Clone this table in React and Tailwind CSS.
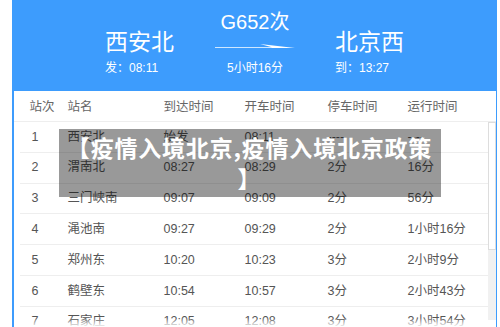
import React from 'react'

const rows = [
  ['1', '西安北', '始发', '08:11', '----', '----'],
  ['2', '渭南北', '08:27', '08:29', '2分', '16分'],
  ['3', '三门峡南', '09:07', '09:09', '2分', '56分'],
  ['4', '渑池南', '09:27', '09:29', '2分', '1小时16分'],
  ['5', '郑州东', '10:20', '10:23', '3分', '2小时9分'],
  ['6', '鹤壁东', '10:54', '10:57', '3分', '2小时43分'],
  ['7', '石家庄', '12:05', '12:08', '3分', '3小时54分'],
]

const latin = { fontFamily: '"Liberation Sans", "Noto Sans CJK SC", sans-serif' }

export default function App() {
  return (
    <div className="w-[500px] h-[327px] overflow-hidden bg-white pl-[12px] pr-[3px]" style={latin}>
      <div className="h-full bg-[#3d9cfd] flex flex-col">
        <div className="h-[91px] shrink-0 flex text-white pl-[93px]">
          <div className="w-[100px] flex flex-col pt-[27px]">
            <span className="text-[23px] leading-[30px]">西安北</span>
            <span className="text-[12px] leading-[16px] mt-[3px]">发：08:11</span>
          </div>
          <div className="w-[100px] flex flex-col items-center pt-[10px]">
            <span className="text-[20px] leading-[24px]">G652次</span>
            <svg width="80" height="8" viewBox="0 0 80 8" className="mt-[9px]">
              <path d="M0 5 H80 L45 1 L57 4.2 H0 Z" fill="white" />
            </svg>
            <span className="text-[12px] leading-[16px] mt-[9px]">5小时16分</span>
          </div>
          <div className="w-[100px] flex flex-col pt-[27px] ml-[30px]">
            <span className="text-[23px] leading-[30px]">北京西</span>
            <span className="text-[12px] leading-[16px] mt-[3px]">到：13:27</span>
          </div>
        </div>
        <div className="relative flex-1 mx-[1.5px] bg-white overflow-hidden text-[12.5px] whitespace-nowrap">
          <div className="grid grid-cols-[38px_96px_81px_83px_80px_1fr] h-[31px] items-center pl-[16px] pt-[2px] text-[#666] border-b border-[#eee]">
            <span>站次</span>
            <span>站名</span>
            <span>到达时间</span>
            <span>开车时间</span>
            <span>停车时间</span>
            <span>运行时间</span>
          </div>
          <div className="flex">
            <div className="flex-1 ml-[6px]">
              {rows.map((r) => (
                <div key={r[0]} className="grid grid-cols-[38px_96px_81px_83px_80px_1fr] h-[30.8px] items-center pl-[10px] text-[#555] border-b border-[#eee]">
                  <span className="pl-[2px]">{r[0]}</span>
                  <span>{r[1]}</span>
                  <span>{r[2]}</span>
                  <span>{r[3]}</span>
                  <span>{r[4]}</span>
                  <span>{r[5]}</span>
                </div>
              ))}
            </div>
            <div className="w-[8px] shrink-0 flex flex-col h-[198px] bg-[#f1f1f1]">
              <div className="h-[128px] bg-white border border-[#ddd]"></div>
            </div>
          </div>
          <div className="absolute left-0 right-[10px] bottom-0 h-[9px] bg-gradient-to-b from-transparent to-white"></div>
          <div className="absolute left-[45px] top-[38px] w-[382px] h-[68px] bg-black/40 flex items-center justify-center whitespace-normal">
            <p className="w-[366px] text-white text-[23px] tracking-[0.8px] leading-[31px] font-bold text-center [line-break:anywhere]" style={{ fontFamily: '"Noto Sans CJK SC", sans-serif' }}>
              【疫情入境北京,疫情入境北京政策】
            </p>
          </div>
        </div>
      </div>
    </div>
  )
}
